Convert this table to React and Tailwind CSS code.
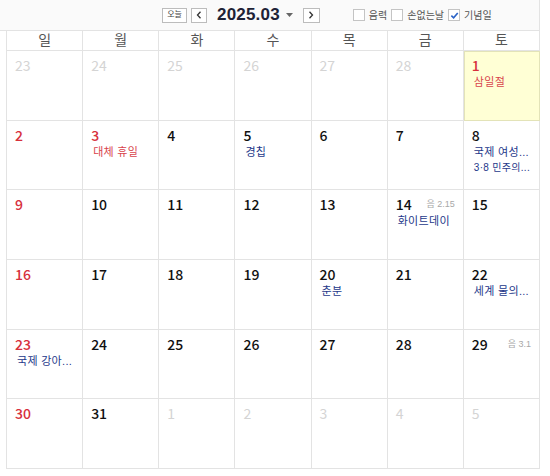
import React from 'react';

const FONT = { fontFamily: '"Liberation Sans", "Noto Sans CJK KR", sans-serif' };
const NUM_FONT = { fontFamily: '"Noto Sans CJK KR", "Liberation Sans", sans-serif' };

const WEEKDAYS = ['일', '월', '화', '수', '목', '금', '토'];

// each cell: [day, kind, events, lunar, highlighted]
// kind: 'out' other month, 'red' holiday/sunday, null normal
const WEEKS = [
  [[23, 'out'], [24, 'out'], [25, 'out'], [26, 'out'], [27, 'out'], [28, 'out'], [1, 'red', [{ t: '삼일절', red: true }], null, true]],
  [[2, 'red'], [3, 'red', [{ t: '대체 휴일', red: true }]], [4], [5, null, [{ t: '경칩' }]], [6], [7], [8, null, [{ t: '국제 여성...' }, { t: '3·8 민주의...', small: true }]]],
  [[9, 'red'], [10], [11], [12], [13], [14, null, [{ t: '화이트데이' }], '음 2.15'], [15]],
  [[16, 'red'], [17], [18], [19], [20, null, [{ t: '춘분' }]], [21], [22, null, [{ t: '세계 물의...' }]]],
  [[23, 'red', [{ t: '국제 강아...' }]], [24], [25], [26], [27], [28], [29, null, null, '음 3.1']],
  [[30, 'red'], [31], [1, 'out'], [2, 'out'], [3, 'out'], [4, 'out'], [5, 'out']],
];

function Checkbox({ label, checked }) {
  return (
    <label className="flex items-center gap-[4px] text-[10px] text-[#555]">
      <span className="w-[12px] h-[12px] border border-[#c4c4c4] bg-white flex items-center justify-center">
        {checked && (
          <svg width="9" height="9" viewBox="0 0 10 10">
            <path d="M1.5 5.2 L4 7.6 L8.6 2.2" fill="none" stroke="#2b63c6" strokeWidth="1.8" />
          </svg>
        )}
      </span>
      {label}
    </label>
  );
}

function Cell({ day, kind, events, lunar, today }) {
  const numColor =
    kind === 'out' ? 'text-[#d4d4d4] font-normal' : kind === 'red' ? 'text-[#d7303c] font-medium' : 'text-[#111] font-medium';
  return (
    <div
      className={`relative border-r border-b border-[#e3e3e3] px-[8px] pt-[5px] ${
        today ? 'bg-[#ffffd5] outline outline-1 outline-[#e3e3b8] -outline-offset-1' : 'bg-white'
      }`}
    >
      <div className={`text-[14px] leading-[18px] ${numColor}`} style={NUM_FONT}>{day}</div>
      {lunar && (
        <div className="absolute top-[8px] right-[8px] text-[9px] text-[#a8a8a8]">{lunar}</div>
      )}
      {events && (
        <div className="mt-[1px] pl-[2px] flex flex-col">
          {events.map((e, i) => (
            <div
              key={i}
              className={`leading-[15px] whitespace-nowrap tracking-[0.3px] ${e.small ? 'text-[10px]' : 'text-[11px]'} ${
                e.red ? 'text-[#d8434c]' : 'text-[#25388a]'
              }`}
            >
              {e.t}
            </div>
          ))}
        </div>
      )}
    </div>
  );
}

export default function App() {
  return (
    <div className="w-[550px] h-[476px] bg-white" style={FONT}>
      {/* Top bar */}
      <div className="h-[31px] w-[540px] bg-[#fafafa] border-b border-r border-[#e3e3e3] flex items-center">
        <div className="ml-[162px] flex items-center">
          <button className="w-[25px] h-[15px] border border-[#bcbcbc] bg-white text-[8px] leading-none text-[#444] flex items-center justify-center">
            오늘
          </button>
          <button className="ml-[4px] w-[16px] h-[15px] border border-[#bcbcbc] bg-white flex items-center justify-center">
            <svg width="6" height="8" viewBox="0 0 6 8">
              <path d="M4.5 0.8 L1.5 4 L4.5 7.2" fill="none" stroke="#333" strokeWidth="1.3" />
            </svg>
          </button>
          <span className="ml-[10px] text-[17px] font-bold text-[#1e2236] tracking-[0.2px]">2025.03</span>
          <svg className="ml-[6px]" width="7" height="4" viewBox="0 0 7 4">
            <path d="M0 0 L7 0 L3.5 4 Z" fill="#666" />
          </svg>
          <button className="ml-[10px] w-[17px] h-[15px] border border-[#bcbcbc] bg-white flex items-center justify-center">
            <svg width="6" height="8" viewBox="0 0 6 8">
              <path d="M1.5 0.8 L4.5 4 L1.5 7.2" fill="none" stroke="#333" strokeWidth="1.3" />
            </svg>
          </button>
        </div>
        <div className="ml-[33px] flex items-center gap-[4px]">
          <Checkbox label="음력" />
          <Checkbox label="손없는날" />
          <Checkbox label="기념일" checked />
        </div>
      </div>

      {/* Calendar */}
      <div className="ml-[6px] w-[534px] border-l border-[#e3e3e3]">
        <div className="grid grid-cols-7 h-[20px]">
          {WEEKDAYS.map((w) => (
            <div
              key={w}
              className="border-r border-b border-[#e3e3e3] text-center text-[14px] leading-[19px] text-[#555]"
            >
              {w}
            </div>
          ))}
        </div>
        <div className="grid grid-cols-7 grid-rows-6 h-[418px]">
          {WEEKS.flat().map(([day, kind, events, lunar, today], i) => (
            <Cell key={i} day={day} kind={kind} events={events} lunar={lunar} today={today} />
          ))}
        </div>
      </div>
    </div>
  );
}
